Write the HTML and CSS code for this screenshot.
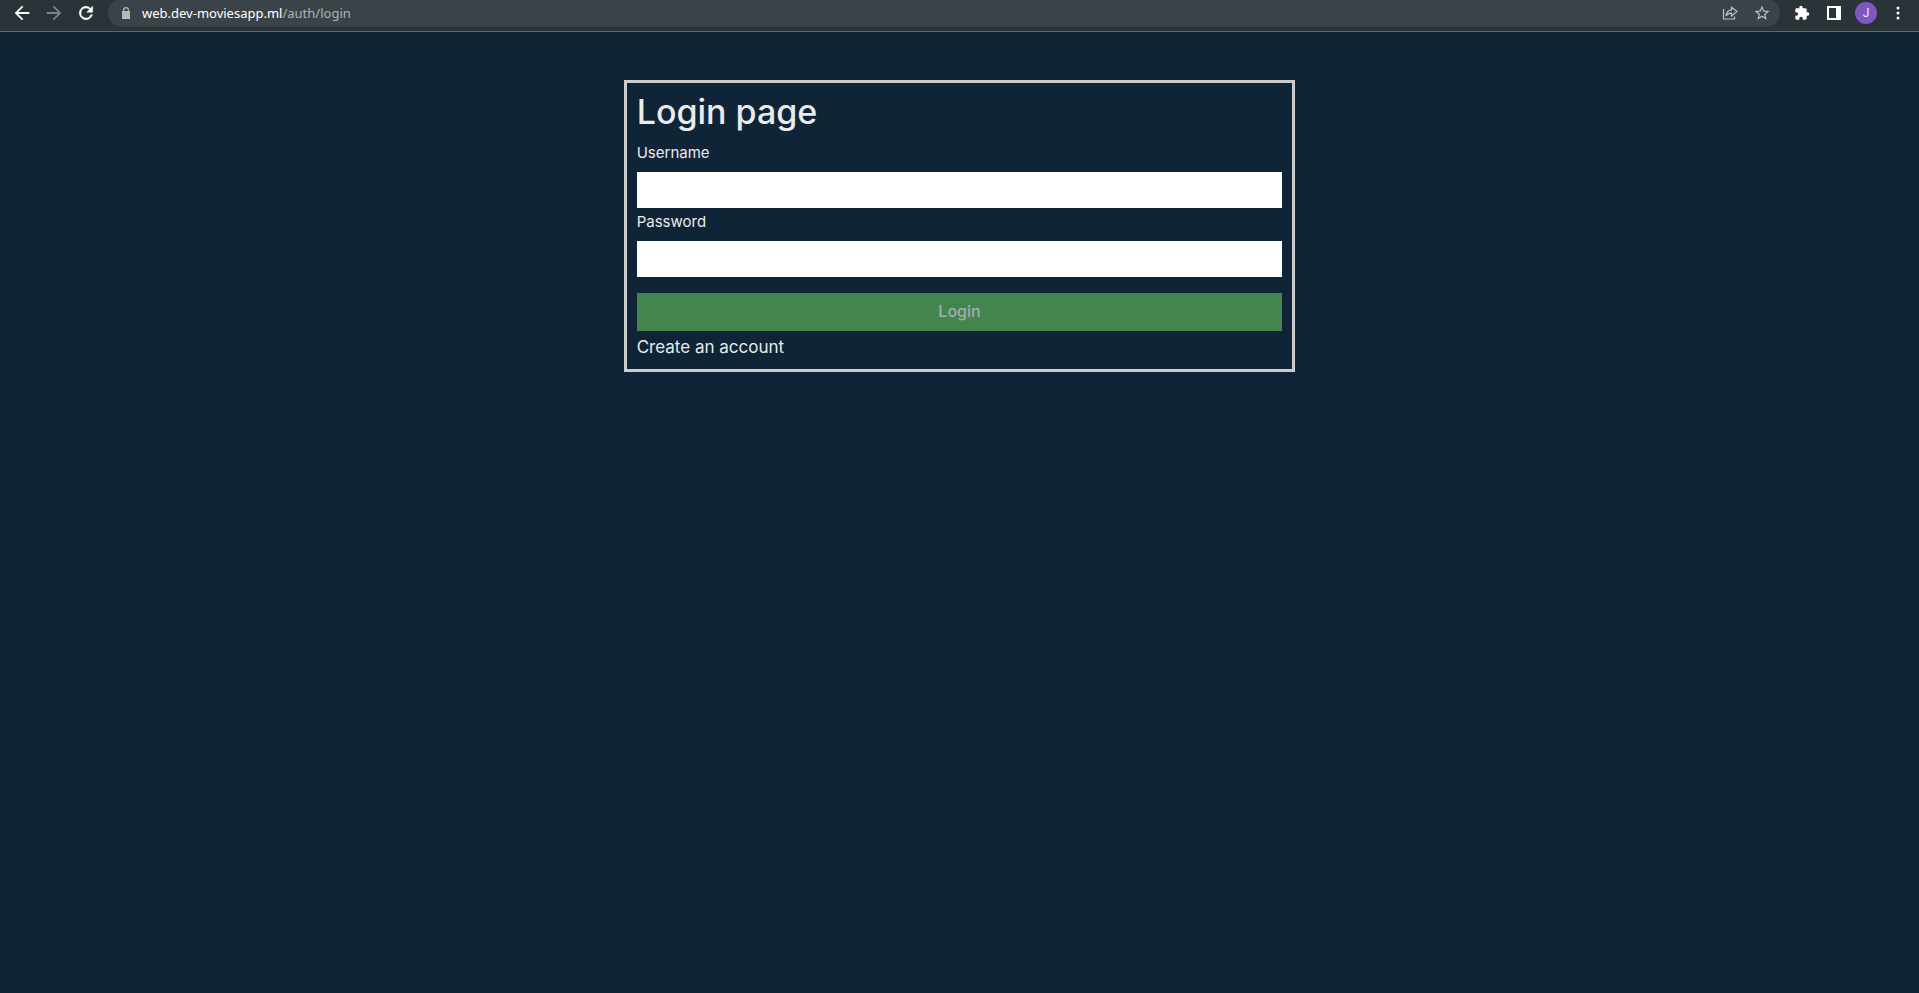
FILE: index.html
```html
<!DOCTYPE html>
<html lang="en">
<head>
  <meta charset="utf-8">
  <meta name="viewport" content="width=device-width, initial-scale=1">
  <title>Login page</title>
  <link rel="stylesheet" href="styles.css">
</head>
<body>
  <header class="toolbar">
    <button class="tool" type="button" aria-label="Back"><svg class="icon" viewBox="0 0 24 24"><path d="M20 11H7.83l5.59-5.59L12 4l-8 8 8 8 1.41-1.41L7.83 13H20z"/></svg></button>
    <button class="tool tool-muted" type="button" aria-label="Forward"><svg class="icon" viewBox="0 0 24 24"><path d="M12 4l-1.410 1.410L16.170 11H4v2h12.170l-5.580 5.590L12 20l8-8z"/></svg></button>
    <button class="tool" type="button" aria-label="Reload"><svg class="icon icon-reload" viewBox="0 0 24 24"><path d="M17.65 6.35A8 8 0 1 0 19.73 14h-2.08A6 6 0 1 1 12 6c1.66 0 3.14.69 4.22 1.78L13 11h7V4z"/></svg></button>
    <div class="address">
      <svg class="lock" viewBox="0 0 8 12"><path fill-rule="evenodd" d="M1 4V3a3 3 0 0 1 6 0v1h1v8H0V4zm1.2 0h3.6V3a1.8 1.8 0 0 0-3.6 0z"/></svg>
      <p class="url"><span class="host">web.dev-moviesapp.ml</span>/auth/login</p>
      <button class="tool tool-soft" type="button" aria-label="Share"><svg class="icon-share" viewBox="0 0 16 16" fill="none" stroke="currentColor" stroke-width="1.2"><path d="M1.5 4v10h11v-2.500M9.500 2.200v2.700C5.800 5.300 4.300 7.500 3.900 11c1.300-2 3-2.800 5.600-2.800v2.700L15 6.500z"/></svg></button>
      <button class="tool tool-soft" type="button" aria-label="Bookmark"><svg class="icon-star" viewBox="0 0 24 24"><path d="M22 9.240l-7.190-.62L12 2 9.190 8.630 2 9.240l5.460 4.730L5.820 21 12 17.270 18.180 21l-1.630-7.030zM12 15.400l-3.760 2.270 1-4.280-3.320-2.880 4.380-.38L12 6.100l1.710 4.040 4.380.38-3.320 2.880 1 4.280z"/></svg></button>
    </div>
    <button class="tool" type="button" aria-label="Extensions"><svg class="icon-puzzle" viewBox="0 0 24 24"><path d="M20.500 11H19V7a2 2 0 0 0-2-2h-4V3.500a2.500 2.500 0 0 0-5 0V5H4a2 2 0 0 0-2 2v3.800h1.500a2.700 2.700 0 0 1 0 5.400H2V20a2 2 0 0 0 2 2h3.800v-1.500a2.700 2.700 0 0 1 5.400 0V22H17a2 2 0 0 0 2-2v-4h1.500a2.500 2.500 0 0 0 0-5z"/></svg></button>
    <button class="tool" type="button" aria-label="Side panel"><svg class="icon-panel" viewBox="0 0 14 14"><path fill-rule="evenodd" d="M0 0h14v14H0zm2 2v10h7V2z"/></svg></button>
    <button class="tool" type="button" aria-label="Profile"><span class="avatar">J</span></button>
    <button class="tool" type="button" aria-label="Menu"><svg class="icon-menu" viewBox="0 0 4 14"><circle cx="2" cy="2" r="1.500"/><circle cx="2" cy="7" r="1.500"/><circle cx="2" cy="12" r="1.500"/></svg></button>
  </header>
  <main class="page">
    <form class="login">
      <h1 class="title">Login page</h1>
      <label class="label" for="username">Username</label>
      <input class="field" id="username" type="text">
      <label class="label" for="password">Password</label>
      <input class="field" id="password" type="password">
      <button class="submit" type="submit" disabled>Login</button>
      <a class="create" href="#">Create an account</a>
    </form>
  </main>
</body>
</html>
```
FILE: styles.css
```css
* {
  box-sizing: border-box;
}

body {
  margin: 0;
  min-height: 100vh;
  background: #102437;
  color: #ebebeb;
  font-family: Inter, "Open Sans", sans-serif;
}

.toolbar {
  display: flex;
  height: 32px;
  padding: 0 5px 5px 6px;
  overflow: hidden;
  background: #293338;
  border-bottom: 1px solid #60686b;
}

.tool {
  display: flex;
  flex: none;
  align-items: center;
  justify-content: center;
  width: 32px;
  height: 26px;
  padding: 0;
  border: 0;
  background: none;
  color: #fff;
}

.tool-muted {
  color: #7d8487;
}

.tool-soft {
  color: #bdc1c3;
}

.tool svg {
  display: block;
}

.tool svg:not([fill]),
.lock {
  fill: currentColor;
}

.icon {
  width: 22px;
  height: 22px;
}

.icon-reload {
  width: 20px;
  height: 20px;
  stroke: currentColor;
  stroke-width: 0.6;
}

.icon-share,
.icon-puzzle {
  width: 16px;
  height: 16px;
}

.icon-star {
  width: 18px;
  height: 18px;
}

.icon-panel {
  width: 14px;
  height: 14px;
}

.icon-menu {
  width: 4px;
  height: 14px;
}

.avatar {
  display: grid;
  flex: none;
  place-items: center;
  width: 22px;
  height: 22px;
  border-radius: 50%;
  background: #7e57c2;
  color: #f1eaff;
  font: 12px Roboto, sans-serif;
}

.address {
  display: flex;
  flex: 1;
  align-items: center;
  height: 28px;
  margin: -1px 6px 0;
  padding: 0 2px 0 14px;
  border-radius: 14px;
  background: #3a4448;
}

.lock {
  width: 8px;
  height: 12px;
  color: #b5babc;
}

.url {
  flex: 1;
  margin: 0 0 0 12px;
  color: #adb2b4;
  font: 13px/20px "Noto Sans", "Open Sans", sans-serif;
}

.host {
  color: #fff;
}

.page {
  padding: 48px 0;
}

.login {
  display: flex;
  flex-direction: column;
  width: 35%;
  min-width: 280px;
  margin: 0 auto;
  padding: 10px;
  border: 3px solid #ccc;
}

.title {
  margin: 0;
  font-size: 34px;
  font-weight: 500;
  line-height: 38px;
}

.label {
  padding: 11px 0 9px;
  font-size: 15px;
  line-height: 21px;
}

.field {
  width: 100%;
  height: 36px;
  padding: 8px;
  border: 0;
  background: #fff;
  font: inherit;
}

.field + .label {
  padding: 3px 0 9px;
}

.submit {
  height: 38px;
  margin-top: 16px;
  padding: 0 0 2px;
  border: 0;
  background: #42854f;
  color: #a4aeb0;
  font: 500 16px Inter, "Open Sans", sans-serif;
}

.create {
  align-self: flex-start;
  margin-top: 4px;
  color: inherit;
  font-size: 17px;
  line-height: 24px;
  text-decoration: none;
}
```
